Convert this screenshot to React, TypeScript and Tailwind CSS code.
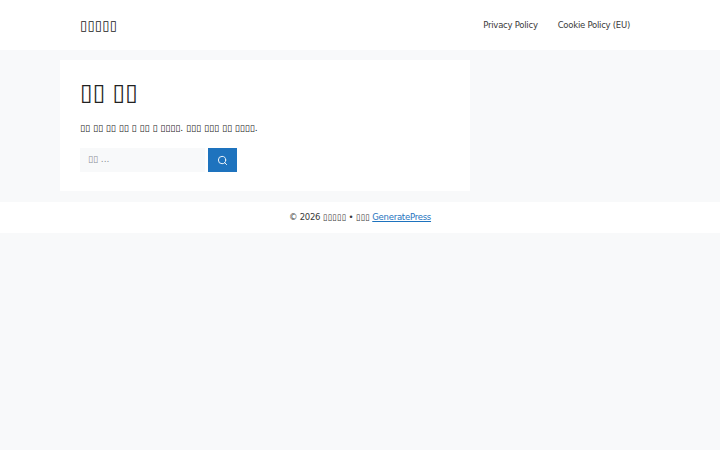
import { Search } from "lucide-react"

export default function App() {
  return (
    <div className="min-h-[450px] bg-[#f8f9fa] font-['DejaVu_Sans',sans-serif] text-[7.5px] text-[#222222]">
      <header className="bg-white">
        <div className="mx-[60px] flex h-[50px] items-center justify-between pl-5 pr-[30px]">
          <div className="text-[13.5px]">▯▯▯▯▯</div>
          <nav className="flex gap-5 text-[8.5px] tracking-[-0.03em] text-[#3a3a3a]">
            <a>Privacy Policy</a>
            <a>Cookie Policy (EU)</a>
          </nav>
        </div>
      </header>

      <main className="mx-[60px] pt-2.5">
        <article className="h-[131px] w-[410px] bg-white p-5">
          <h1 className="text-[23px] leading-[25px] text-[#222222]">▯▯ ▯▯</h1>
          <p className="mt-[15px] text-[9.1px] leading-[16px]">▯▯ ▯▯ ▯▯ ▯▯ ▯ ▯▯ ▯ ▯▯▯▯. ▯▯▯ ▯▯▯ ▯▯ ▯▯▯▯.</p>
          <form className="mt-3 flex gap-[3px]">
            <div className="flex h-6 w-[125px] items-center bg-[#f8f9fa] px-2 text-[9px] text-[#8a8f96]">▯▯ ...</div>
            <button type="button" className="flex h-6 w-[29px] items-center justify-center bg-[#1e73be] text-white">
              <Search size={11} strokeWidth={2} />
            </button>
          </form>
        </article>
      </main>

      <footer className="mt-[11px] flex h-[31px] items-center justify-center bg-white text-[8.5px] tracking-[-0.03em] text-[#3a3a3a]">
        <span>
          © 2026 <span className="tracking-normal">▯▯▯▯▯</span> • <span className="tracking-normal">▯▯▯</span>{" "}
          <a className="text-[#1e73be] underline">GeneratePress</a>
        </span>
      </footer>
    </div>
  )
}
